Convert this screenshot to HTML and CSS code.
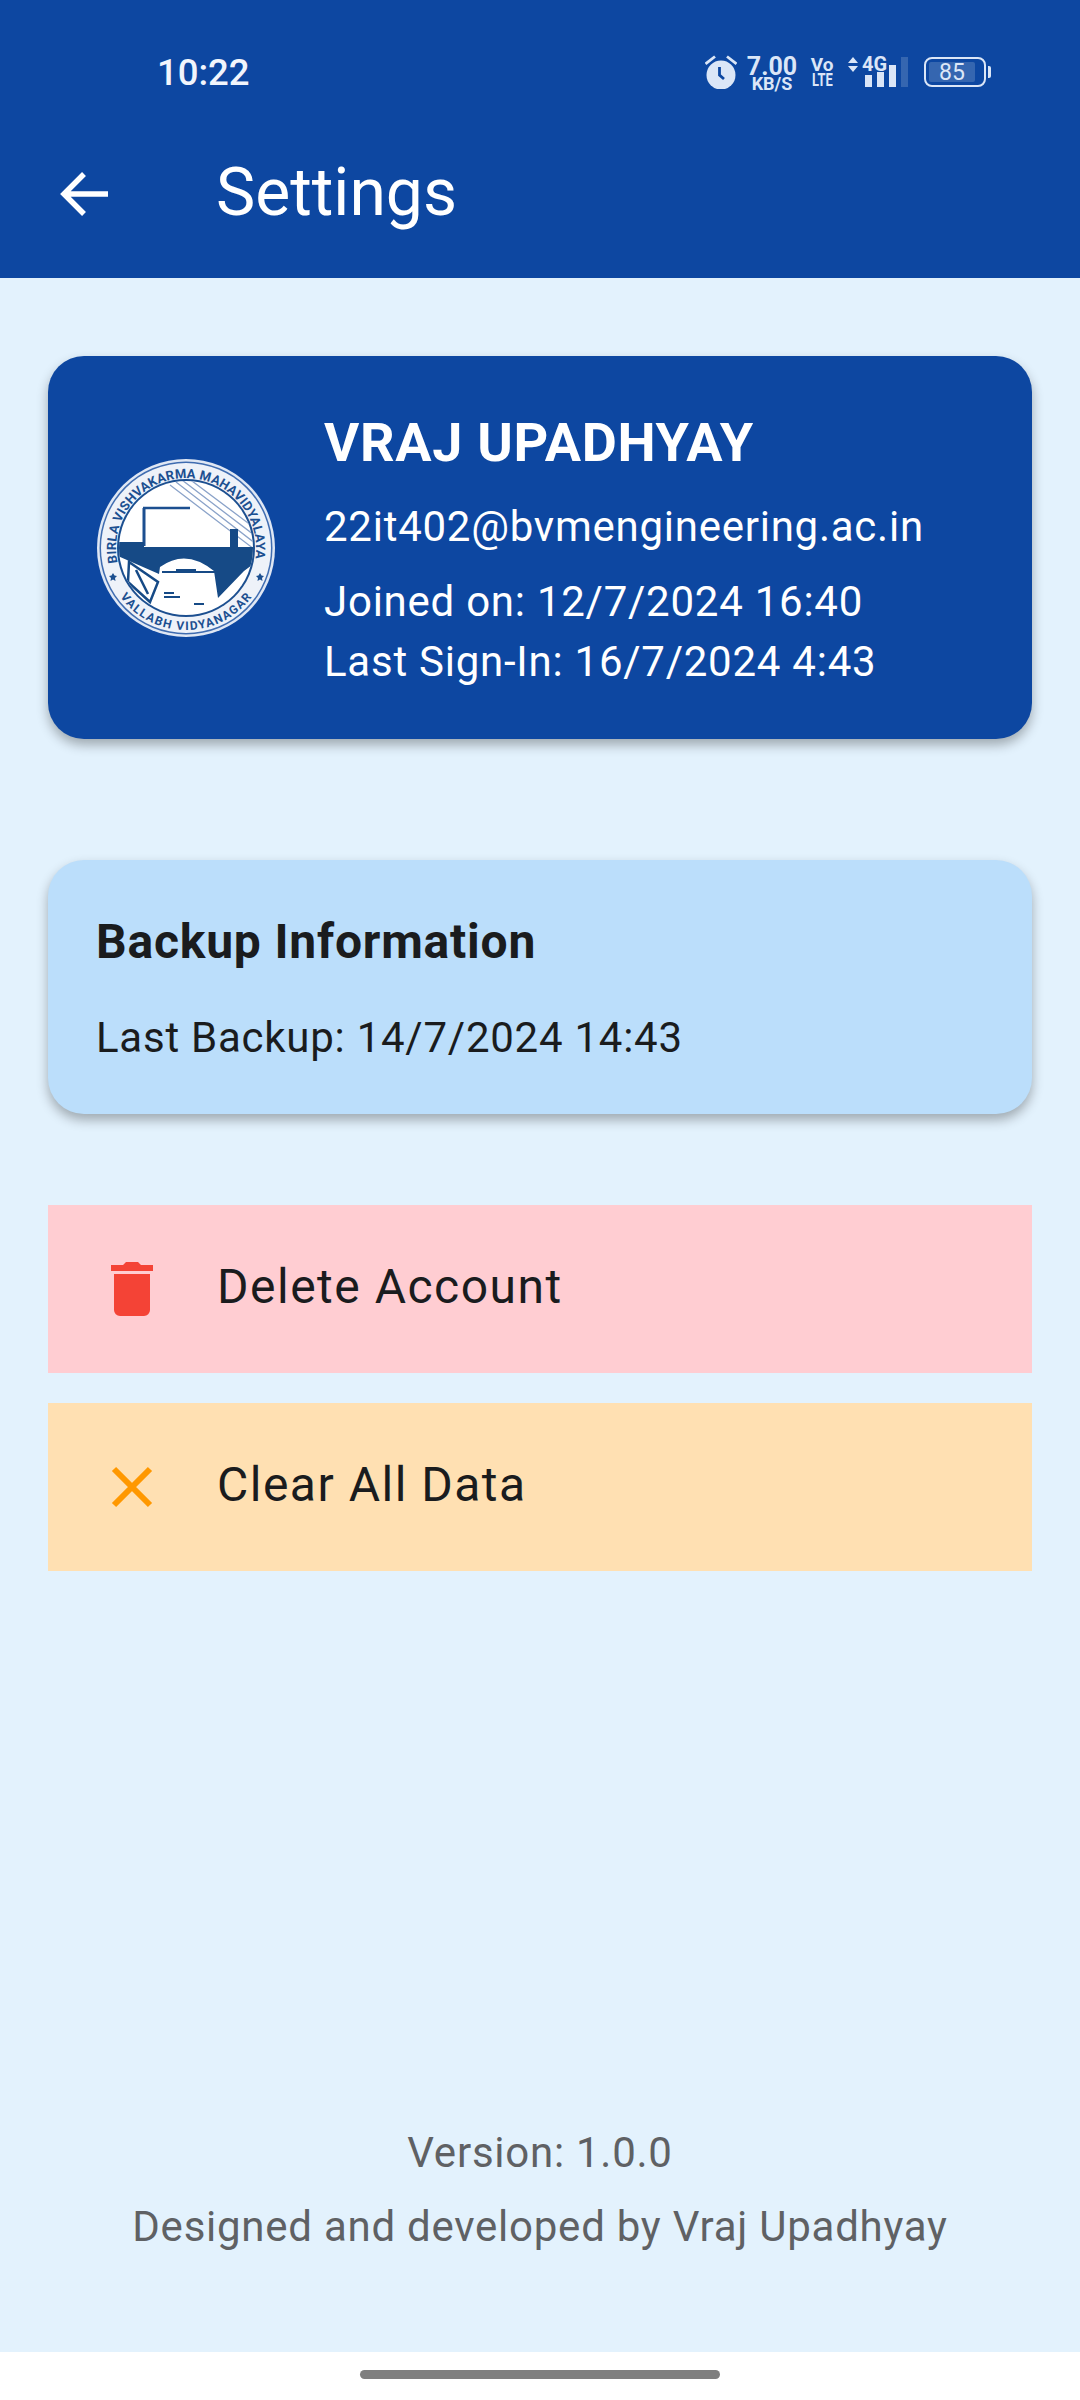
FILE: index.html
```html
<!DOCTYPE html>
<html lang="en">
<head>
    <meta charset="UTF-8">
    <meta name="viewport" content="width=device-width, initial-scale=1.0">
    <title>Settings</title>
    <link rel="stylesheet" href="styles.css">
</head>
<body>

<div class="screen">
    <header class="top">
        <div class="status-bar">
            <span class="clock">10:22</span>
            <div class="status-icons">
                <svg class="alarm" viewBox="0 0 32 34" width="32" height="34">
                    <path d="M0.500 9 L10 1.500 M31.500 9 L22 1.500" stroke="#dbe6f7" stroke-width="2.800" fill="none"/>
                    <circle cx="16" cy="20" r="14.500" fill="#dbe6f7"/>
                    <path d="M14.500 12 V20 L19 24" stroke="#0d47a1" stroke-width="2.800" fill="none"/>
                </svg>
                <div class="speed">
                    <span class="speed-num">7.00</span>
                    <span class="speed-unit">KB/S</span>
                </div>
                <div class="volte">
                    <span class="volte-top">Vo</span>
                    <span class="volte-bottom">LTE</span>
                </div>
                <div class="network">
                    <div class="net-type">
                        <svg class="updown" viewBox="0 0 10 15" width="10" height="15">
                            <path d="M5 0 L10 6 H0 Z M0 9 H10 L5 15 Z" fill="#dbe6f7"/>
                        </svg>
                        <span class="four-g">4G</span>
                    </div>
                    <div class="signal">
                        <i class="bar bar-1"></i>
                        <i class="bar bar-2"></i>
                        <i class="bar bar-3"></i>
                        <i class="bar bar-4"></i>
                    </div>
                </div>
                <div class="battery">
                    <div class="battery-body">
                        <div class="battery-fill"></div>
                        <span class="battery-num">85</span>
                    </div>
                    <i class="battery-tip"></i>
                </div>
            </div>
        </div>
        <div class="app-bar">
            <svg class="back" viewBox="0 0 48 48" width="48" height="48">
                <path d="M4 24 H48 M24 4 L4 24 L24 44" stroke="#fff" stroke-width="5.500" fill="none"/>
            </svg>
            <h1 class="title">Settings</h1>
        </div>
    </header>

    <main class="content">
        <section class="profile-card">
            <svg class="logo" viewBox="0 0 180 180" width="180" height="180">
                <defs>
                    <path id="arcTop" d="M21.500 104.600 A70 70 0 1 1 158.500 104.600"/>
                    <path id="arcBottom" d="M21.200 134.700 A82 82 0 0 0 158.800 134.700"/>
                    <clipPath id="inner"><circle cx="90" cy="90" r="67"/></clipPath>
                </defs>
                <circle cx="90" cy="90" r="89" fill="#dfe7f4"/>
                <circle cx="90" cy="90" r="86.500" fill="#3f6cb0"/>
                <circle cx="90" cy="90" r="85" fill="#eef2f9"/>
                <text class="logo-text" font-size="13"><textPath href="#arcTop" textLength="244">BIRLA VISHVAKARMA MAHAVIDYALAYA</textPath></text>
                <text class="logo-text" font-size="12"><textPath href="#arcBottom" startOffset="5" textLength="153">VALLABH VIDYANAGAR</textPath></text>
                <circle cx="90" cy="90" r="69" fill="#1c4f90"/>
                <circle cx="90" cy="90" r="67" fill="#fff"/>
                <g clip-path="url(#inner)">
                    <path d="M74 27 L158 91 M80 24 L160 86 M86 22 L162 80 M92 20 L164 74" stroke="#8ba3c9" stroke-width="1.300" fill="none"/>
                    <path d="M47 50 H94" stroke="#1c4f90" stroke-width="2.500"/>
                    <path d="M48 50 V88" stroke="#1c4f90" stroke-width="3"/>
                    <path d="M138 71 V90" stroke="#164a86" stroke-width="8"/>
                    <path d="M20 84 H48 V89 H160 V104 L148 113 L122 140 L118 113 Q90 90 64 109 L63 116 L22 98 Z" fill="#164a86"/>
                    <path d="M66 113 Q90 92 117 113 L112 120 H72 Z" fill="#fff"/>
                    <path d="M66 114 H120 M80 112 H100" stroke="#164a86" stroke-width="1.800" fill="none"/>
                    <path d="M33 104 L62 124 L54 144 L32 124 Z" fill="#fff" stroke="#164a86" stroke-width="2.500"/>
                    <path d="M40 112 L52 136" stroke="#164a86" stroke-width="2.500" fill="none"/>
                    <path d="M68 135 H78 M68 139 H84 M98 146 H108" stroke="#164a86" stroke-width="1.800" fill="none"/>
                </g>
                <path d="M17 115 l1.500 2.500 l2.500 .5 l-2 2 l.5 3 l-2.500 -1.500 l-2.500 1.500 l.5 -3 l-2 -2 l2.500 -.5 z M164 115 l1.500 2.500 l2.500 .5 l-2 2 l.5 3 l-2.500 -1.500 l-2.500 1.500 l.5 -3 l-2 -2 l2.500 -.5 z" fill="#1c4f90"/>
            </svg>
            <div class="profile-text">
                <div class="profile-name">VRAJ UPADHYAY</div>
                <div class="profile-email">22it402@bvmengineering.ac.in</div>
                <div class="profile-date">Joined on: 12/7/2024 16:40</div>
                <div class="profile-date">Last Sign-In: 16/7/2024 4:43</div>
            </div>
        </section>

        <section class="backup-card">
            <div class="backup-title">Backup Information</div>
            <div class="backup-line">Last Backup: 14/7/2024 14:43</div>
        </section>

        <div class="action action-delete">
            <svg class="action-icon" viewBox="0 0 42 54" width="42" height="54">
                <path d="M0 3 H12 L15 0 H27 L30 3 H42 V9 H0 Z M3 12 H39 V48 A6 6 0 0 1 33 54 H9 A6 6 0 0 1 3 48 Z" fill="#f44336"/>
            </svg>
            <span class="action-label">Delete Account</span>
        </div>
        <div class="action action-clear">
            <svg class="action-icon" viewBox="0 0 42 42" width="42" height="42">
                <path d="M3 3 L39 39 M39 3 L3 39" stroke="#ff9800" stroke-width="6" fill="none"/>
            </svg>
            <span class="action-label">Clear All Data</span>
        </div>

        <footer class="footer">
            <div class="footer-line">Version: 1.0.0</div>
            <div class="footer-line">Designed and developed by Vraj Upadhyay</div>
        </footer>
    </main>

    <div class="nav-bar">
        <div class="home-pill"></div>
    </div>
</div>

</body>
</html>
```

FILE: styles.css
```css
body {
    margin: 0;
    background-color: #fff;
    font-family: Roboto, "Noto Sans", sans-serif;
}
.screen {
    width: 1080px;
    height: 2400px;
    display: flex;
    flex-direction: column;
    overflow: hidden;
}
.top {
    background-color: #0d47a1;
    color: #fff;
}
.status-bar {
    height: 110px;
    display: flex;
    align-items: center;
    justify-content: space-between;
    padding: 34px 89px 0 157px;
    box-sizing: border-box;
}
.clock {
    font-size: 36.500px;
    font-weight: 500;
    color: #f1f5fc;
}
.status-icons {
    display: flex;
    align-items: center;
    color: #dbe6f7;
}
.alarm {
    margin-right: 11px;
}
.speed {
    width: 48px;
    display: flex;
    flex-direction: column;
    align-items: center;
    font-weight: 700;
    margin-top: 3px;
    margin-right: 15px;
}
.speed-num {
    font-size: 25px;
    line-height: 19px;
}
.speed-unit {
    font-size: 18px;
    line-height: 15px;
}
.volte {
    width: 22px;
    display: flex;
    flex-direction: column;
    align-items: center;
    font-weight: 700;
    margin-right: 15px;
}
.volte-top {
    font-size: 19px;
    line-height: 15px;
}
.volte-bottom {
    font-size: 19px;
    line-height: 15px;
    transform: scaleX(0.68);
}
.network {
    width: 60px;
    height: 30px;
    display: flex;
    margin-right: 16px;
}
.net-type {
    flex: none;
    width: 37px;
    height: 14px;
    display: flex;
    align-items: center;
}
.updown {
    flex: none;
    margin-right: 4px;
}
.four-g {
    font-size: 20px;
    line-height: 14px;
    font-weight: 700;
}
.signal {
    flex: none;
    display: flex;
    align-items: flex-end;
    gap: 5px;
    height: 30px;
    margin-left: -20px;
}
.bar {
    width: 7px;
    background-color: #dbe6f7;
}
.bar-1 { height: 12px; }
.bar-2 { height: 15px; }
.bar-3 { height: 22px; }
.bar-4 { height: 30px; background-color: #3566b0; }
.battery {
    display: flex;
    align-items: center;
}
.battery-body {
    width: 62px;
    height: 30px;
    border: 2px solid #dbe6f7;
    border-radius: 8px;
    box-sizing: border-box;
    position: relative;
    display: flex;
    align-items: center;
    justify-content: center;
}
.battery-fill {
    position: absolute;
    left: 3px;
    top: 3px;
    bottom: 3px;
    width: 46px;
    background-color: #3566b0;
    border-radius: 2px;
}
.battery-num {
    position: relative;
    font-size: 23px;
    color: #dbe6f7;
    margin-right: 6px;
}
.battery-tip {
    width: 3px;
    height: 12px;
    margin-left: 2px;
    background-color: #dbe6f7;
    border-radius: 0 2px 2px 0;
}
.app-bar {
    height: 168px;
    display: flex;
    align-items: center;
    padding-left: 60px;
}
.back {
    flex: none;
}
.title {
    margin: 0 0 4px 108px;
    font-size: 66px;
    font-weight: 400;
}
.content {
    flex: 1;
    display: flex;
    flex-direction: column;
    padding: 78px 48px 0;
    background-color: #e3f2fd;
    color: #1a1c1e;
}
.profile-card {
    height: 383px;
    box-sizing: border-box;
    display: flex;
    align-items: center;
    padding: 0 48px;
    background-color: #0d47a1;
    border-radius: 36px;
    box-shadow: 0 6px 12px rgba(0, 0, 0, 0.3);
    color: #fff;
}
.logo {
    flex: none;
}
.profile-text {
    margin-left: 48px;
    padding-top: 7px;
}
.profile-name {
    font-size: 54px;
    font-weight: 700;
    line-height: 66px;
    letter-spacing: 0.700px;
}
.profile-email {
    font-size: 42px;
    line-height: 56px;
    letter-spacing: 0.750px;
    margin-top: 23px;
    margin-bottom: 17px;
}
.profile-date {
    font-size: 42px;
    line-height: 60px;
    letter-spacing: 0.750px;
}
.backup-card {
    height: 254px;
    box-sizing: border-box;
    margin-top: 121px;
    padding: 52px 48px 0;
    background-color: #bbdefb;
    border-radius: 36px;
    box-shadow: 0 6px 12px rgba(0, 0, 0, 0.3);
}
.backup-title {
    font-size: 48px;
    font-weight: 700;
    line-height: 60px;
    letter-spacing: 0.800px;
}
.backup-line {
    font-size: 42px;
    line-height: 56px;
    letter-spacing: 0.750px;
    margin-top: 38px;
}
.action {
    height: 168px;
    display: flex;
    align-items: center;
    padding-left: 63px;
}
.action-delete {
    margin-top: 91px;
    background-color: #ffcdd2;
}
.action-clear {
    margin-top: 30px;
    background-color: #ffe0b2;
}
.action-icon {
    flex: none;
}
.action-label {
    margin-left: 64px;
    padding-bottom: 6px;
    font-size: 48px;
    letter-spacing: 1.500px;
}
.footer {
    margin-top: auto;
    padding-bottom: 88px;
    text-align: center;
    color: #5f6164;
}
.footer-line {
    font-size: 42px;
    line-height: 74px;
    letter-spacing: 0.750px;
}
.nav-bar {
    height: 48px;
    display: flex;
    justify-content: center;
    padding-top: 18px;
    box-sizing: border-box;
    background-color: #fff;
}
.home-pill {
    width: 360px;
    height: 9px;
    border-radius: 5px;
    background-color: #7f7f7f;
}
.logo-text {
    fill: #1c4f90;
    font-weight: 700;
}
```
